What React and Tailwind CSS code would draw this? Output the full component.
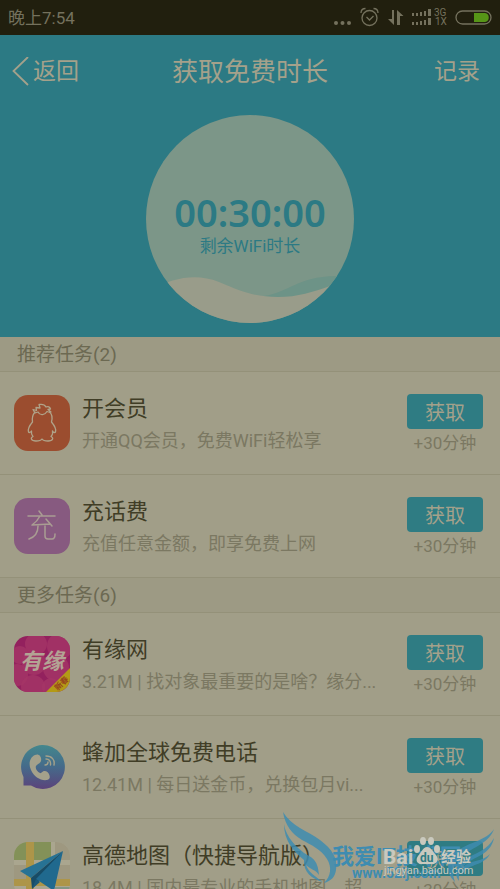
import { useState } from 'react'

const recommended = [
    { id: 1, title: '开会员', desc: '开通QQ会员，免费WiFi轻松享', icon: 'penguin' },
    { id: 2, title: '充话费', desc: '充值任意金额，即享免费上网', icon: 'recharge' }
]

const more = [
    { id: 3, title: '有缘网', desc: '3.21M | 找对象最重要的是啥？缘分...', icon: 'youyuan' },
    { id: 4, title: '蜂加全球免费电话', desc: '12.41M | 每日送金币，兑换包月vi...', icon: 'phone' },
    { id: 5, title: '高德地图（快捷导航版）', desc: '18.4M | 国内最专业的手机地图，超...', icon: 'map' }
]

const PenguinIcon = () => (
    <svg className="w-14 h-14" viewBox="0 0 56 56" fill="none">
        <rect width="56" height="56" rx="14" fill="#9b4d2f" />
        <path
            d="M21 17C18.500 20 18 24 18.500 27C16 30 13.500 34 14.500 37C15 38 16.500 37.500 17.500 36C17 39 18 40.500 19 41.500C16 43 17 46 22 46C25 46 27 45.500 28 44C29 45.500 31 46 34 46C39 46 40 43 37 41.500C38.500 40 39 38 38.500 36C39.500 37.500 41 38 41.500 37C42.500 34 40 30 37.500 27C38.500 23 38 19 35.500 17"
            stroke="#b0a389" strokeWidth="1.300" strokeLinejoin="round" strokeLinecap="round"
        />
        <path
            d="M21 18L19 14.500L22.500 15.500L22 12.500L26 13L25 9.500C28 9 31 10 32 12C34 11 36 12 36.500 14L34 14.500L37 17C35.500 17.500 34 17 33 16.500C31 20 26 21 24 17Z"
            stroke="#b0a389" strokeWidth="1.300" strokeLinejoin="round"
        />
    </svg>
)

const RechargeIcon = () => (
    <svg className="w-14 h-14" viewBox="0 0 56 56" fill="none">
        <rect width="56" height="56" rx="14" fill="#875a80" />
        <g stroke="#a99d92" strokeWidth="1.500" strokeLinecap="round" strokeLinejoin="round">
            <path d="M25 13L28 17M14 18H41M26 18C24 22 21 25 18 27L36 26M32 21L38 28" />
            <path d="M24 28C24 35 21 39 15 41M31 28V38C31 40 32 41 34 41H38C40 41 41 40 41 36" />
        </g>
    </svg>
)

const YouyuanIcon = () => (
    <div className="relative w-14 h-14 rounded-[14px] overflow-hidden flex items-center justify-center">
        <svg className="absolute inset-0 w-14 h-14" viewBox="0 0 56 56">
            <rect width="56" height="56" fill="#93215e" />
            <g fill="#a53666" fillOpacity="0.800">
                <circle cx="22" cy="8" r="11" />
                <circle cx="46" cy="10" r="13" />
                <circle cx="6" cy="19" r="9" />
                <circle cx="20" cy="27" r="12" />
                <circle cx="42" cy="32" r="13" />
                <circle cx="3" cy="39" r="11" />
                <circle cx="19" cy="51" r="12" />
                <circle cx="37" cy="51" r="9" />
            </g>
            <path d="M56 32V56H32Z" fill="#b39a16" />
        </svg>
        <span className="relative pb-1 text-[22px] leading-6 font-bold italic text-[#b3a394]">有缘</span>
        <span className="absolute right-0 bottom-1 -rotate-45 text-[8px] leading-2 font-bold text-[#97451c]">新春</span>
    </div>
)

const PhoneIcon = () => (
    <svg className="w-14 h-14" viewBox="0 0 56 56" fill="none">
        <defs>
            <linearGradient id="call" x1="0" y1="0" x2="0" y2="1">
                <stop offset="0" stopColor="#43878d" />
                <stop offset="0.500" stopColor="#456a8a" />
                <stop offset="1" stopColor="#5b437b" />
            </linearGradient>
        </defs>
        <path d="M28 6A22 22 0 1 1 17 46.500L9.500 46.500V38A22 22 0 0 1 28 6Z" fill="url(#call)" />
        <path
            d="M21 16C16 18 14 25 17 31C20 38 27 42 33 41C36 40.500 36 38 35.500 36.500C35 33 31 31 29 32.500C27.500 33.500 27 34.500 26 34C23 33 21 29 22 27C23 25 26 25 27 22C28 18 25 14 21 16Z"
            fill="#a4a18b"
        />
        <path d="M31 26C33 26 34 25 34 23M32 20C35 20 37 22 36.500 26M32 17C38 17 41 21 40 26" stroke="#a4a18b" strokeWidth="1.400" strokeLinecap="round" />
    </svg>
)

const MapIcon = () => (
    <svg className="w-14 h-14" viewBox="0 0 56 56">
        <defs>
            <clipPath id="tile"><rect width="56" height="56" rx="14" /></clipPath>
        </defs>
        <g clipPath="url(#tile)">
            <rect width="56" height="56" fill="#aaa68f" />
            <path d="M0 0H37V18H0Z" fill="#839158" />
            <path d="M41 0H56V18H41ZM0 23H12V37H0ZM20 23H56V37H20Z" fill="#9e9880" />
            <path d="M12 0H20V56H12ZM0 37H56V44H0Z" fill="#ad9549" />
            <path d="M41 45H56V56H41Z" fill="#829684" />
        </g>
        <path d="M49 9L6 29L17 36Z" fill="#277294" />
        <path d="M49 9L17 36L18 47Z" fill="#174c67" />
        <path d="M49 9L22 37L40 49Z" fill="#20698e" />
        <path d="M22 37L18 47L26 40Z" fill="#1b5877" />
    </svg>
)

const icons = {
    penguin: PenguinIcon,
    recharge: RechargeIcon,
    youyuan: YouyuanIcon,
    phone: PhoneIcon,
    map: MapIcon
}

const StatusBar = () => (
    <div className="shrink-0 h-[35px] px-2 bg-[#211f0e] text-[#74715d] flex items-center justify-between">
        <span className="text-[17px] leading-6">晚上7:54</span>
        <svg className="w-[160px] h-[35px]" viewBox="332 0 160 35" fill="none">
            <g fill="#74715d">
                <circle cx="336" cy="23" r="2" />
                <circle cx="342.500" cy="23" r="2" />
                <circle cx="349" cy="23" r="2" />
                <path d="M392 10H394V25L388 19H392ZM397 25V10L403.500 16H400V25Z" />
                <path d="M412 13h2v3h-2zM416 13h2v3h-2zM420 12h2v4h-2zM424 11h2v5h-2zM428 9h3v7h-3z" />
                <path d="M412 22h2v3h-2zM416 22h2v3h-2zM420 21h2v4h-2zM424 20h2v5h-2zM428 18h3v7h-3z" />
                <text x="434" y="16" fontSize="10">3G</text>
                <text x="435" y="25" fontSize="10">1X</text>
            </g>
            <g stroke="#74715d" strokeWidth="1.300">
                <circle cx="369.500" cy="18" r="7.500" />
                <path d="M361 13C361 10 363 8.500 365.500 8.500M378 13C378 10 376 8.500 373.500 8.500M366.500 17L369.500 20L373.500 16" />
                <rect x="456" y="11" width="35" height="13" rx="6.500" />
            </g>
            <path d="M474 13H485C490 13 490 22 485 22H474Z" fill="#569517" />
        </svg>
    </div>
)

const TimeLeft = () => (
    <div className="relative mx-auto mt-[10px] w-[208px] h-[208px] rounded-full overflow-hidden bg-[#7c9688]">
        <svg className="absolute inset-0 w-full h-full" viewBox="0 0 208 208">
            <path d="M118 181C144 177 150 162 190 161L208 165V182H118Z" fill="#6d9387" />
            <path d="M0 178C22 164 48 157 73 167C96 177 110 182 132 182C152 182 167 177 184 171L208 160V208H0Z" fill="#999c8a" />
        </svg>
        <div className="relative pt-[74px] text-center text-[#2c7a84]">
            <p className="font-['Noto_Sans'] font-semibold text-[38px] leading-[47px]">00:30:00</p>
            <p className="text-[17px] leading-5">剩余WiFi时长</p>
        </div>
    </div>
)

const SectionTitle = ({ children }) => (
    <h2 className="h-[35px] px-[17px] pt-[2px] flex items-center bg-[#9d9a84] border-b border-[#949179] text-[19px] leading-6 font-normal text-[#6c6952]">
        {children}
    </h2>
)

const TaskRow = ({ task, onTake }) => {
    const Icon = icons[task.icon]

    return (
        <li className="h-[103px] pl-[14px] pr-[17px] flex items-center border-b border-[#949179]">
            <div className="shrink-0"><Icon /></div>
            <div className="flex-1 min-w-0 pt-1 pl-3 pr-2">
                <h3 className="text-[22px] leading-8 font-normal whitespace-nowrap text-[#403d26]">{task.title}</h3>
                <p className="text-[18px] leading-8 whitespace-nowrap text-[#7b7862]">{task.desc}</p>
            </div>
            <div className="shrink-0 w-[76px] flex flex-col items-center">
                <button
                    type="button"
                    onClick={() => onTake(task.id)}
                    className="w-full h-[35px] pt-[3px] rounded-sm bg-[#2f7c83] text-[20px] leading-6 text-[#a4a18b]"
                >
                    获取
                </button>
                <span className="pt-1 text-[17px] leading-5 whitespace-nowrap text-[#7b7862]">+30分钟</span>
            </div>
        </li>
    )
}

const Watermark = () => (
    <div className="absolute right-0 bottom-0 w-[220px] h-[80px] pointer-events-none">
        <svg className="absolute inset-0 w-full h-full" viewBox="280 809 220 80" fill="#3e8cb0" fillOpacity="0.850">
            <path d="M283 812C291 826 308 831 320 840C332 849 338 858 336 870C335 877 331 881 324 883C331 876 332 867 327 859C321 849 311 845 302 840C292 834 285 825 283 812Z" />
            <path d="M284 824C286 838 297 847 304 853C311 857 318 859 319 875C315 869 311 870 306 865C309 873 315 876 323 882C312 879 303 872 304 860C294 852 284 841 284 824Z" />
            <path d="M494 829C490 842 474 847 462 856C453 863 451 871 455 882C445 872 446 860 457 851C469 842 486 841 494 829Z" />
            <path d="M494 838C491 852 481 855 470 861C462 866 458 872 459 881C453 873 456 865 464 860C475 853 488 850 494 838Z" />
            <path d="M490 854C486 862 477 864 470 867C466 869 463 872 462 875C461 869 464 865 469 863C477 860 484 860 490 854Z" />
        </svg>
        <span className="absolute left-[52px] top-8 text-[22px] leading-8 font-bold whitespace-nowrap text-[#3e8cb0]">我爱IT技术网</span>
        <span className="absolute left-[72px] top-14 text-[14px] leading-4 font-bold text-[#3e8cb0]">www.52ij.com</span>
        <span className="absolute left-[103px] top-9 text-[21px] leading-6 font-bold text-[#c9c9be]">Bai</span>
        <svg className="absolute left-[133px] top-[26px] w-7 h-8" viewBox="0 0 28 32" fill="#c9c9be">
            <ellipse cx="4" cy="14" rx="3" ry="4" />
            <ellipse cx="10" cy="6" rx="3" ry="4" />
            <ellipse cx="18" cy="6" rx="3" ry="4" />
            <ellipse cx="24" cy="14" rx="3" ry="4" />
            <path d="M14 12C18 12 20 17 23 20C27 25 23 30 18 29H10C4 30 2 25 5 21C8 18 10 12 14 12Z" />
        </svg>
        <span className="absolute left-[140px] top-[41px] text-[12px] leading-4 font-bold text-[#2f7c83]">du</span>
        <span className="absolute left-[161px] top-9 text-[15px] leading-6 font-bold text-[#c9c9be]">经验</span>
        <span className="absolute left-[104px] top-[54px] text-[11px] leading-4 text-[#c9c9be]">jingyan.baidu.com</span>
    </div>
)

const App = () => {
    const [taken, setTaken] = useState([])

    const handleTake = (id) => {
        if (!taken.includes(id)) {
            setTaken([...taken, id])
        }
    }

    return (
        <div className="relative h-screen overflow-hidden flex flex-col bg-[#a19e88] font-[Roboto,'Noto_Sans_CJK_SC',sans-serif]">
            <StatusBar />

            <div className="shrink-0 h-[302px] bg-[#2c7a84] text-[#a4a18b]">
                <header className="h-[70px] px-3 pt-1 grid grid-cols-[1fr_auto_1fr] items-center">
                    <button type="button" className="flex items-center gap-1 text-[23px] leading-8">
                        <svg className="w-[17px] h-[30px]" viewBox="0 0 17 30" fill="none" stroke="currentColor" strokeWidth="1.800">
                            <path d="M16 0L1.500 14L16 28" />
                        </svg>
                        返回
                    </button>
                    <h1 className="text-[26px] leading-8 font-normal">获取免费时长</h1>
                    <button type="button" className="justify-self-end pr-2 text-[23px] leading-8">记录</button>
                </header>
                <TimeLeft />
            </div>

            <main className="flex-1 min-h-0 overflow-hidden">
                <SectionTitle>推荐任务(2)</SectionTitle>
                <ul>
                    {recommended.map((task) => (
                        <TaskRow key={task.id} task={task} onTake={handleTake} />
                    ))}
                </ul>
                <SectionTitle>更多任务(6)</SectionTitle>
                <ul>
                    {more.map((task) => (
                        <TaskRow key={task.id} task={task} onTake={handleTake} />
                    ))}
                </ul>
            </main>

            <Watermark />
        </div>
    )
}

export default App
